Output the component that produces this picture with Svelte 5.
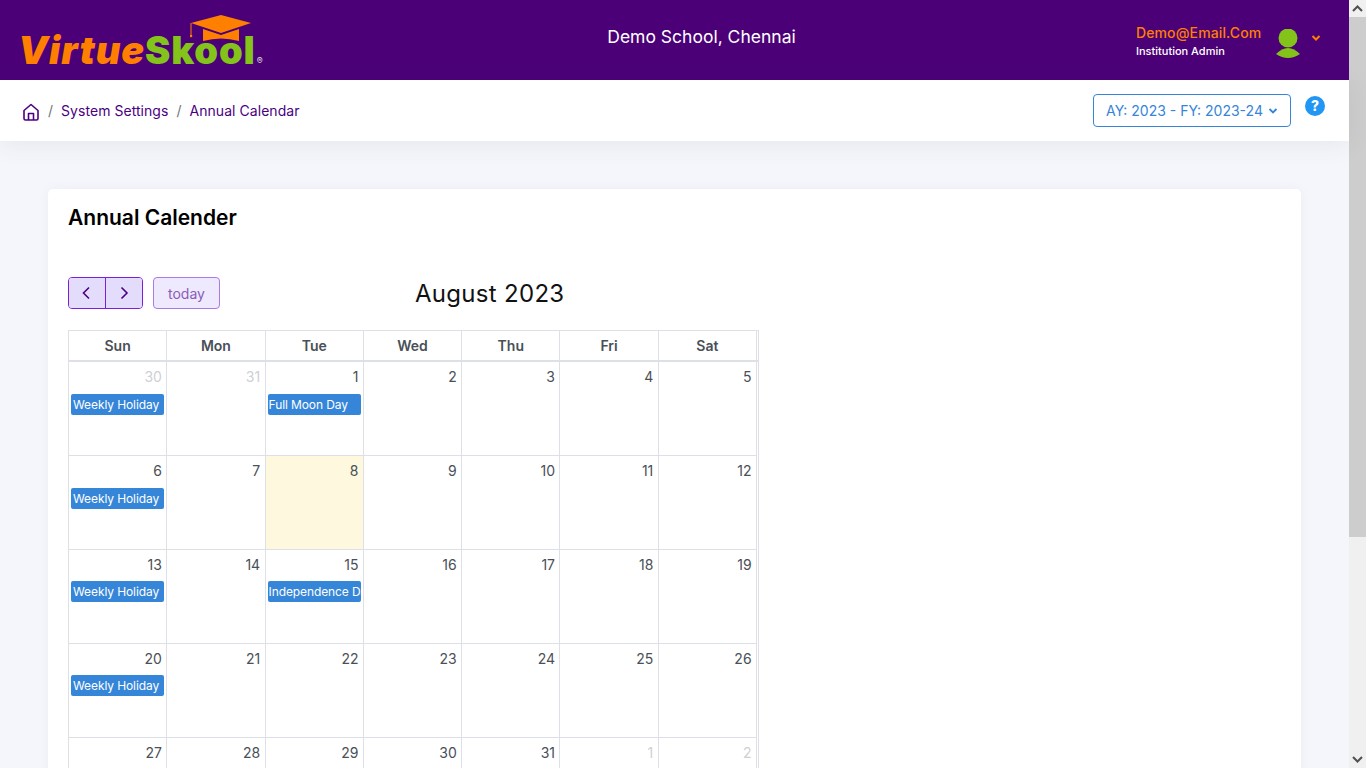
<script>
	const days = ['Sun', 'Mon', 'Tue', 'Wed', 'Thu', 'Fri', 'Sat'];
	const weeks = [
		[30, 31, 1, 2, 3, 4, 5],
		[6, 7, 8, 9, 10, 11, 12],
		[13, 14, 15, 16, 17, 18, 19],
		[20, 21, 22, 23, 24, 25, 26],
		[27, 28, 29, 30, 31, 1, 2]
	];
	const events = { 'w0d0': 'Weekly Holiday', 'w0d2': 'Full Moon Day', 'w1d0': 'Weekly Holiday', 'w2d0': 'Weekly Holiday', 'w2d2': 'Independence Day', 'w3d0': 'Weekly Holiday' };

	function isOther(w, d) {
		return (w === 0 && d < 2) || (w === 4 && d > 4);
	}
</script>

<div class="screen">
	<div class="page">
		<header class="topbar">
			<div class="logo">
				<svg class="cap" width="62" height="30" viewBox="0 0 62 30">
					<path d="M31 0 L61 8 L31 18 L1 8 Z" fill="#ff7f00" />
					<path d="M13 14 L31 20 L49 14 L49 26 Q31 21 13 26 Z" fill="#ff7f00" />
					<path d="M1 8 L1 20" stroke="#ff7f00" stroke-width="1" fill="none" />
					<circle cx="1" cy="21" r="1.3" fill="#ff7f00" />
				</svg>
				<span class="virtue">Virtue</span><span class="skool">Skool</span><span class="reg">®</span>
			</div>
			<div class="school">Demo School, Chennai</div>
			<div class="user">
				<div class="who">
					<div class="email">Demo@Email.Com</div>
					<div class="role">Institution Admin</div>
				</div>
				<svg class="avatar" width="26" height="30" viewBox="0 0 26 30">
					<circle cx="13" cy="9" r="9.5" fill="#84c31a" />
					<path d="M1 25 Q13 13 25 25 Q13 33 1 25 Z" fill="#84c31a" />
				</svg>
				<svg class="caret" width="10" height="8" viewBox="0 0 10 8">
					<path d="M1.5 2 L5 5.5 L8.5 2" stroke="#ff7f00" stroke-width="2" fill="none" />
				</svg>
			</div>
		</header>

		<nav class="crumbs">
			<svg class="home" width="18" height="18" viewBox="0 0 18 18">
				<path d="M2 7.5 L9 1.5 L16 7.5 V15.5 Q16 17 14.5 17 H3.5 Q2 17 2 15.5 Z M6.5 17 V10.5 H11.5 V17" fill="none" stroke="#4b0082" stroke-width="1.6" stroke-linejoin="round" />
			</svg>
			<span class="sep">/</span>
			<span class="crumb">System Settings</span>
			<span class="sep">/</span>
			<span class="crumb">Annual Calendar</span>
			<div class="year">
				AY: 2023 - FY: 2023-24
				<svg width="10" height="8" viewBox="0 0 10 8">
					<path d="M1.5 2 L5 5.5 L8.5 2" stroke="#3585d8" stroke-width="1.8" fill="none" />
				</svg>
			</div>
			<div class="help">?</div>
		</nav>

		<main class="content">
			<section class="card">
				<h1>Annual Calender</h1>
				<div class="toolbar">
					<div class="nav-group">
						<button class="nav" aria-label="previous">
							<svg width="10" height="14" viewBox="0 0 10 14"><path d="M7 1.5 L1.5 7 L7 12.5" stroke="#4b0082" stroke-width="1.6" fill="none" /></svg>
						</button>
						<button class="nav" aria-label="next">
							<svg width="10" height="14" viewBox="0 0 10 14"><path d="M2.5 1.5 L8 7 L2.5 12.5" stroke="#4b0082" stroke-width="1.6" fill="none" /></svg>
						</button>
					</div>
					<button class="today">today</button>
					<h2>August 2023</h2>
				</div>

				<div class="calendar">
					<div class="row head">
						{#each days as day}
							<div class="dow">{day}</div>
						{/each}
					</div>
					{#each weeks as week, w}
						<div class="row week">
							{#each week as date, d}
								<div class="cell" class:now={w === 1 && d === 2}>
									<div class="num" class:other={isOther(w, d)}>{date}</div>
									{#if events[`w${w}d${d}`]}
										<div class="event" class:wide={d === 0}>{events[`w${w}d${d}`]}</div>
									{/if}
								</div>
							{/each}
						</div>
					{/each}
				</div>
			</section>
		</main>
	</div>

	<div class="scrollbar">
		<div class="arrow"><svg width="11" height="7" viewBox="0 0 11 7"><path d="M1 6 L5.5 1.5 L10 6" stroke="#505050" stroke-width="2" fill="none" /></svg></div>
		<div class="thumb"></div>
		<div class="track"></div>
		<div class="arrow"><svg width="11" height="7" viewBox="0 0 11 7"><path d="M1 1 L5.5 5.5 L10 1" stroke="#505050" stroke-width="2" fill="none" /></svg></div>
	</div>
</div>

<style>
	:global(body) {
		font-family: Inter, "Liberation Sans", sans-serif;
		overflow: hidden;
	}
	.screen {
		display: flex;
		height: 768px;
		overflow: hidden;
		background: #f4f6fb;
	}
	.page {
		flex: 1;
		min-width: 0;
	}
	.scrollbar {
		width: 17px;
		display: flex;
		flex-direction: column;
		background: #f0f0f0;
	}
	.arrow {
		height: 17px;
		display: flex;
		align-items: center;
		justify-content: center;
	}
	.thumb {
		height: 520px;
		background: #cdcdcd;
	}
	.track {
		flex: 1;
	}
	.topbar {
		height: 80px;
		background: #4b0078;
		display: flex;
		align-items: center;
		position: relative;
		padding: 0 28px 0 18px;
	}
	.logo {
		width: 249px;
		height: 80px;
		position: relative;
		display: flex;
		align-items: baseline;
		padding-top: 28px;
		box-sizing: border-box;
		font-family: Inter, sans-serif;
		font-weight: 900;
		font-size: 38px;
		line-height: 44px;
		letter-spacing: 0.9px;
	}
	.cap {
		position: absolute;
		left: 172px;
		top: 15px;
	}
	.virtue { color: #ff7f00; font-style: italic; }
	.skool { color: #84c31a; }
	.reg {
		color: #ddd;
		font-size: 9px;
		font-weight: 400;
		letter-spacing: 0;
		margin-left: 1px;
	}
	.school {
		flex: 1;
		text-align: center;
		color: #fff;
		font-size: 17.5px;
		margin: -7px 0 0 0;
	}
	.user {
		display: flex;
		align-items: center;
	}
	.who {
		width: 139px;
		margin-top: 1px;
	}
	.email {
		color: #ff7f00;
		font-size: 14px;
		font-weight: 500;
		line-height: 20px;
		letter-spacing: 0.12px;
	}
	.role {
		color: #fff;
		font-size: 11px;
		line-height: 16px;
		font-weight: 500;
	}
	.avatar {
		margin: 7px 0 0 0;
	}
	.caret {
		margin: -5px 0 0 10px;
	}
	.crumbs {
		height: 61px;
		background: #fff;
		display: flex;
		align-items: center;
		padding: 0 23px 0 22px;
		color: #4b0082;
		font-size: 14px;
		box-shadow: 0 4px 24px rgba(60, 60, 90, 0.08);
		position: relative;
	}
	.home {
		margin-top: 2px;
	}
	.sep {
		color: #6c757d;
		margin: 0 8px;
	}
	.crumb {
		letter-spacing: 0.05px;
	}
	.year {
		margin-left: auto;
		width: 198px;
		height: 33px;
		box-sizing: border-box;
		border: 1px solid #3585d8;
		border-radius: 4px;
		color: #3585d8;
		display: flex;
		align-items: center;
		justify-content: center;
		gap: 5px;
	}
	.help {
		width: 20px;
		height: 20px;
		border-radius: 50%;
		background: #2196f3;
		color: #fff;
		font-size: 14px;
		font-weight: 800;
		text-align: center;
		line-height: 20px;
		margin: -10px 1px 0 14px;
	}
	.content {
		padding: 48px 48px 0 48px;
	}
	.card {
		background: #fff;
		border-radius: 5px;
		padding: 16px 20px;
		box-shadow: 0 0 12px rgba(60, 60, 90, 0.04);
	}
	h1 {
		font-size: 21px;
		font-weight: 600;
		line-height: 26px;
		color: #000;
		margin: 0 0 46px;
	}
	.toolbar {
		display: flex;
		align-items: center;
		height: 32px;
		width: 690px;
		position: relative;
		margin-bottom: 21px;
	}
	.nav-group {
		display: flex;
		border: 1px solid #7b1fd8;
		border-radius: 4px;
		overflow: hidden;
		height: 32px;
		box-sizing: border-box;
	}
	button {
		font-family: inherit;
		padding: 0;
	}
	.nav {
		width: 36px;
		background: #e3dcfb;
		border: none;
		display: flex;
		align-items: center;
		justify-content: center;
	}
	.nav + .nav {
		width: 37px;
		border-left: 1px solid #7b1fd8;
	}
	.today {
		width: 67px;
		height: 32px;
		margin-left: 10px;
		background: #efe9fd;
		border: 1px solid #ab7be5;
		border-radius: 4px;
		color: #8a5cb8;
		font-size: 14px;
	}
	h2 {
		position: absolute;
		left: 347px;
		margin: 0;
		font-size: 24px;
		font-weight: 400;
		color: #111;
		letter-spacing: 0.3px;
	}
	.calendar {
		width: 691px;
		border-top: 1px solid #dde0e6;
		border-left: 1px solid #dde0e6;
		border-right: 1px solid #dde0e6;
		box-sizing: border-box;
	}
	.row {
		display: grid;
		grid-template-columns: repeat(7, 98.29px);
		box-sizing: border-box;
	}
	.head {
		height: 31px;
		border-bottom: 2px solid #dde0e6;
	}
	.dow {
		text-align: center;
		font-size: 14px;
		font-weight: 600;
		color: #495057;
		line-height: 29px;
		border-right: 1px solid #dde0e6;
	}
	.week {
		height: 94px;
	}
	.cell {
		border-right: 1px solid #dde0e6;
		border-bottom: 1px solid #dde0e6;
		padding: 5px 2px 0 2px;
		box-sizing: border-box;
		min-width: 0;
	}
	.now {
		background: #fdf8de;
	}
	.num {
		text-align: right;
		font-size: 14px;
		line-height: 20px;
		color: #495057;
		padding-right: 2.4px;
	}
	.num.other {
		color: #ced0d3;
	}
	.event {
		margin-top: 7px;
		height: 21px;
		background: #3585d8;
		border-radius: 2px;
		color: #fff;
		font-size: 12px;
		line-height: 21px;
		padding-left: 1px;
		white-space: nowrap;
		overflow: hidden;
		letter-spacing: -0.1px;
	}
	.event.wide {
		padding-left: 2px;
	}
	.week:nth-child(4) .event,
	.week:nth-child(5) .event {
		margin-top: 6px;
	}
</style>
